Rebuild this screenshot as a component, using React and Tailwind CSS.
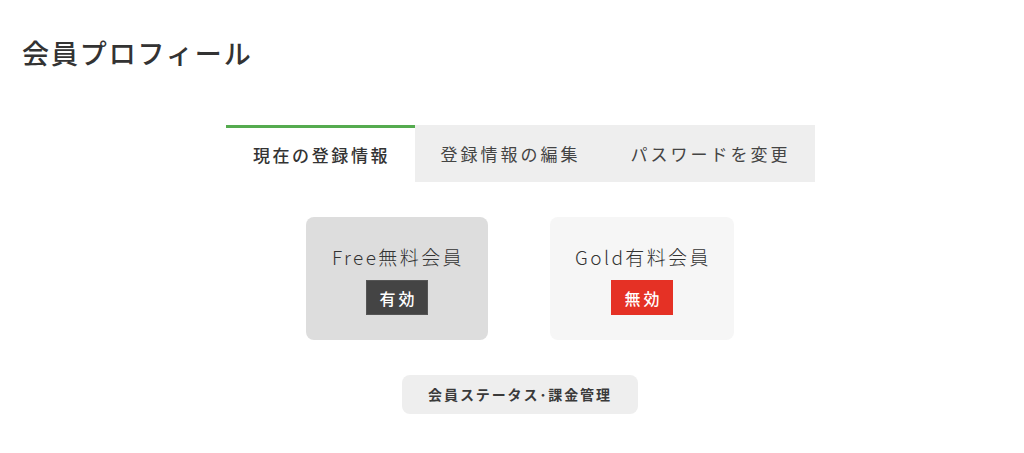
import React from 'react'

const font = { fontFamily: '"Noto Sans CJK JP", "Noto Sans", sans-serif' }

const tabs = [
    { label: '現在の登録情報', w: 'w-[189px]' },
    { label: '登録情報の編集', w: 'w-[189px]' },
    { label: 'パスワードを変更', w: 'w-[211px]' },
]

const App = () => {
    return (
        <div className="w-[1024px] h-[453px] bg-white text-[#333]" style={font}>
            <h1 className="pl-[22px] pt-[33px] text-[27px] leading-[40px] font-medium tracking-[1.9px] text-[#333]">
                会員プロフィール
            </h1>

            <div className="pl-4 flex flex-col items-center">
                {/* Tabs */}
                <div className="mt-[52px] flex">
                    {tabs.map((t, i) => (
                        <div
                            key={t.label}
                            className={
                                i === 0
                                    ? `${t.w} h-[57px] pl-[3px] flex items-center justify-center border-t-[3px] border-[#55ab4f] bg-white text-[17px] font-medium tracking-[2.6px] text-[#333]`
                                    : `${t.w} h-[57px] pl-[3px] flex items-center justify-center bg-[#eeeeee] text-[17px] tracking-[3px] text-[#444]`
                            }
                        >
                            {t.label}
                        </div>
                    ))}
                </div>

                {/* Plan cards */}
                <div className="mt-[35px] flex gap-[62px]">
                    <div className="w-[182px] h-[123px] rounded-[8px] bg-[#dddddd] flex flex-col items-center pt-[25px]">
                        <div className="text-[19px] leading-[30px] font-light tracking-[2.4px] pl-[2px] text-[#333]">Free無料会員</div>
                        <div className="mt-[8px] w-[62px] h-[35px] flex items-center justify-center bg-[#444] border border-[#555] text-white text-[16px] font-medium tracking-[3px] pl-[3px]">
                            有効
                        </div>
                    </div>
                    <div className="w-[184px] h-[123px] rounded-[8px] bg-[#f6f6f6] flex flex-col items-center pt-[25px]">
                        <div className="text-[19px] leading-[30px] font-light tracking-[2.4px] pl-[2px] text-[#333]">Gold有料会員</div>
                        <div className="mt-[8px] w-[62px] h-[35px] flex items-center justify-center bg-[#e53125] text-white text-[16px] font-medium tracking-[3px] pl-[3px]">
                            無効
                        </div>
                    </div>
                </div>

                {/* Status button */}
                <button className="mt-[35px] w-[236px] h-[39px] rounded-[8px] bg-[#eeeeee] text-[14px] font-bold tracking-[1.9px] text-[#3a3a3a]">
                    会員ステータス･課金管理
                </button>
            </div>
        </div>
    )
}

export default App
